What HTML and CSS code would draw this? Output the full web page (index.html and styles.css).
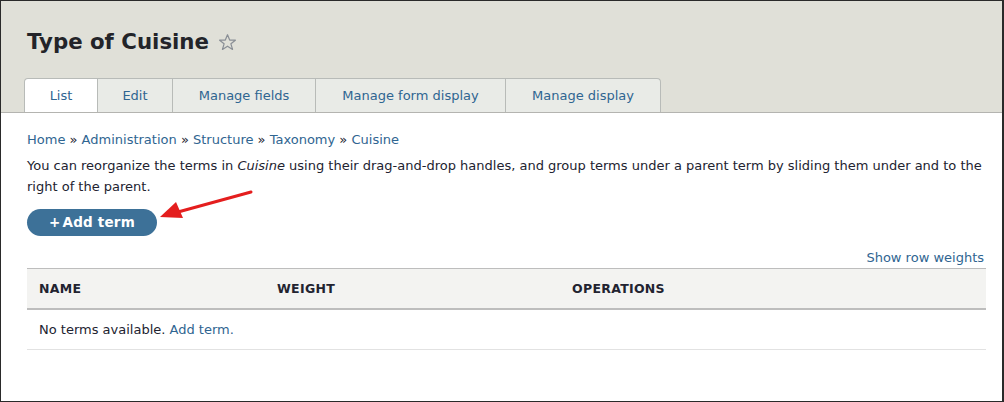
FILE: index.html
```html
<!DOCTYPE html>
<html>
<head>
<meta charset="utf-8">
<link rel="stylesheet" href="styles.css">
</head>
<body>
<div class="frame">
  <header class="head">
    <h1 class="title">Type of Cuisine <svg class="star" width="19" height="19" viewBox="0 0 20 20"><path d="M10 1.8 L12.3 7.4 L18.3 7.6 L13.6 11.4 L15.3 17.3 L10 13.9 L4.7 17.3 L6.4 11.4 L1.7 7.6 L7.7 7.4 Z" fill="none" stroke="#8a8f96" stroke-width="1.3" stroke-linejoin="round"/></svg></h1>
    <nav class="tabs">
      <a class="tab active" style="width:74px">List</a>
      <a class="tab" style="width:75px">Edit</a>
      <a class="tab" style="width:143px">Manage fields</a>
      <a class="tab" style="width:190px">Manage form display</a>
      <a class="tab last" style="width:155px">Manage display</a>
    </nav>
  </header>
  <main class="content">
    <div class="crumbs"><a>Home</a> » <a>Administration</a> » <a>Structure</a> » <a>Taxonomy</a> » <a>Cuisine</a></div>
    <p class="help">You can reorganize the terms in <em>Cuisine</em> using their drag-and-drop handles, and group terms under a parent term by sliding them under and to the right of the parent.</p>
    <div class="actions">
      <a class="button"><span class="plus">+</span>Add term</a>
      <svg class="arrow" width="110" height="40" viewBox="0 0 110 40"><line x1="95" y1="2" x2="22" y2="22" stroke="#e41e1e" stroke-width="3" stroke-linecap="round"/><path d="M4 27 L20 12 L27 28 Z" fill="#e41e1e"/></svg>
    </div>
    <div class="weights"><a>Show row weights</a></div>
    <table class="terms">
      <thead>
        <tr><th class="c1">Name</th><th class="c2">Weight</th><th class="c3">Operations</th></tr>
      </thead>
      <tbody>
        <tr><td colspan="3">No terms available. <a>Add term.</a></td></tr>
      </tbody>
    </table>
  </main>
</div>
</body>
</html>
```

FILE: styles.css
```css
html, body {
  margin: 0;
  padding: 0;
}
body {
  font-family: "DejaVu Sans", sans-serif;
  color: #222330;
  font-size: 13px;
}
.frame {
  width: 1001px;
  height: 400px;
  border-top: 1px solid #2a2a2a;
  border-left: 1px solid #2a2a2a;
  border-bottom: 1px solid #2a2a2a;
  border-right: 2px solid #2a2a2a;
  background: #fff;
  overflow: hidden;
}
.head {
  background: #e0e0d8;
  border-bottom: 1px solid #b4b4b0;
  height: 111px;
  display: flex;
  flex-direction: column;
  justify-content: flex-end;
}
.title {
  margin: 0 0 22px 26px;
  font-size: 21.3px;
  font-weight: bold;
  color: #232429;
  line-height: 28px;
  display: flex;
  align-items: center;
  gap: 9px;
}
.star {
  margin-top: 1px;
}
.tabs {
  display: flex;
  margin-left: 23px;
}
.tab {
  box-sizing: border-box;
  height: 34px;
  line-height: 34px;
  text-align: center;
  background: #e9ebe7;
  border: 1px solid #b8bbb8;
  border-bottom: none;
  border-left: none;
  color: #2f6591;
  font-size: 13px;
}
.tab.active {
  background: #fff;
  border-left: 1px solid #b8bbb8;
  border-top-left-radius: 4px;
}
.tab.last {
  border-top-right-radius: 4px;
}
.content {
  padding: 0 18px 0 26px;
}
a {
  color: #2f6591;
}
.crumbs {
  margin-top: 18px;
  line-height: 18px;
}
.help {
  margin: 6px 0 0 0;
  line-height: 21px;
}
.actions {
  display: flex;
  align-items: flex-start;
  margin-top: 12px;
  height: 28px;
}
.button {
  box-sizing: border-box;
  width: 130px;
  height: 27px;
  border-radius: 14px;
  background: #3d7198;
  color: #fff;
  font-weight: bold;
  font-size: 13.5px;
  line-height: 27px;
  text-align: center;
  letter-spacing: 0.2px;
}
.plus {
  margin-right: 2px;
}
.arrow {
  margin-left: -1px;
  margin-top: -19px;
}
.weights {
  text-align: right;
  margin-top: 12px;
  line-height: 18px;
}
.terms {
  width: 959px;
  border-collapse: collapse;
  margin-top: 1px;
}
.terms th {
  text-align: left;
  text-transform: uppercase;
  font-weight: bold;
  font-size: 12.5px;
  letter-spacing: 0.3px;
  background: #f3f3f1;
  border-top: 1px solid #bdbdbd;
  border-bottom: 2px solid #bdbdbd;
  height: 39px;
  padding: 0 12px;
}
.terms th.c1 { width: 214px; }
.terms th.c2 { width: 271px; }
.terms td {
  height: 39px;
  padding: 0 12px;
  border-bottom: 1px solid #e2e2e2;
}
```
